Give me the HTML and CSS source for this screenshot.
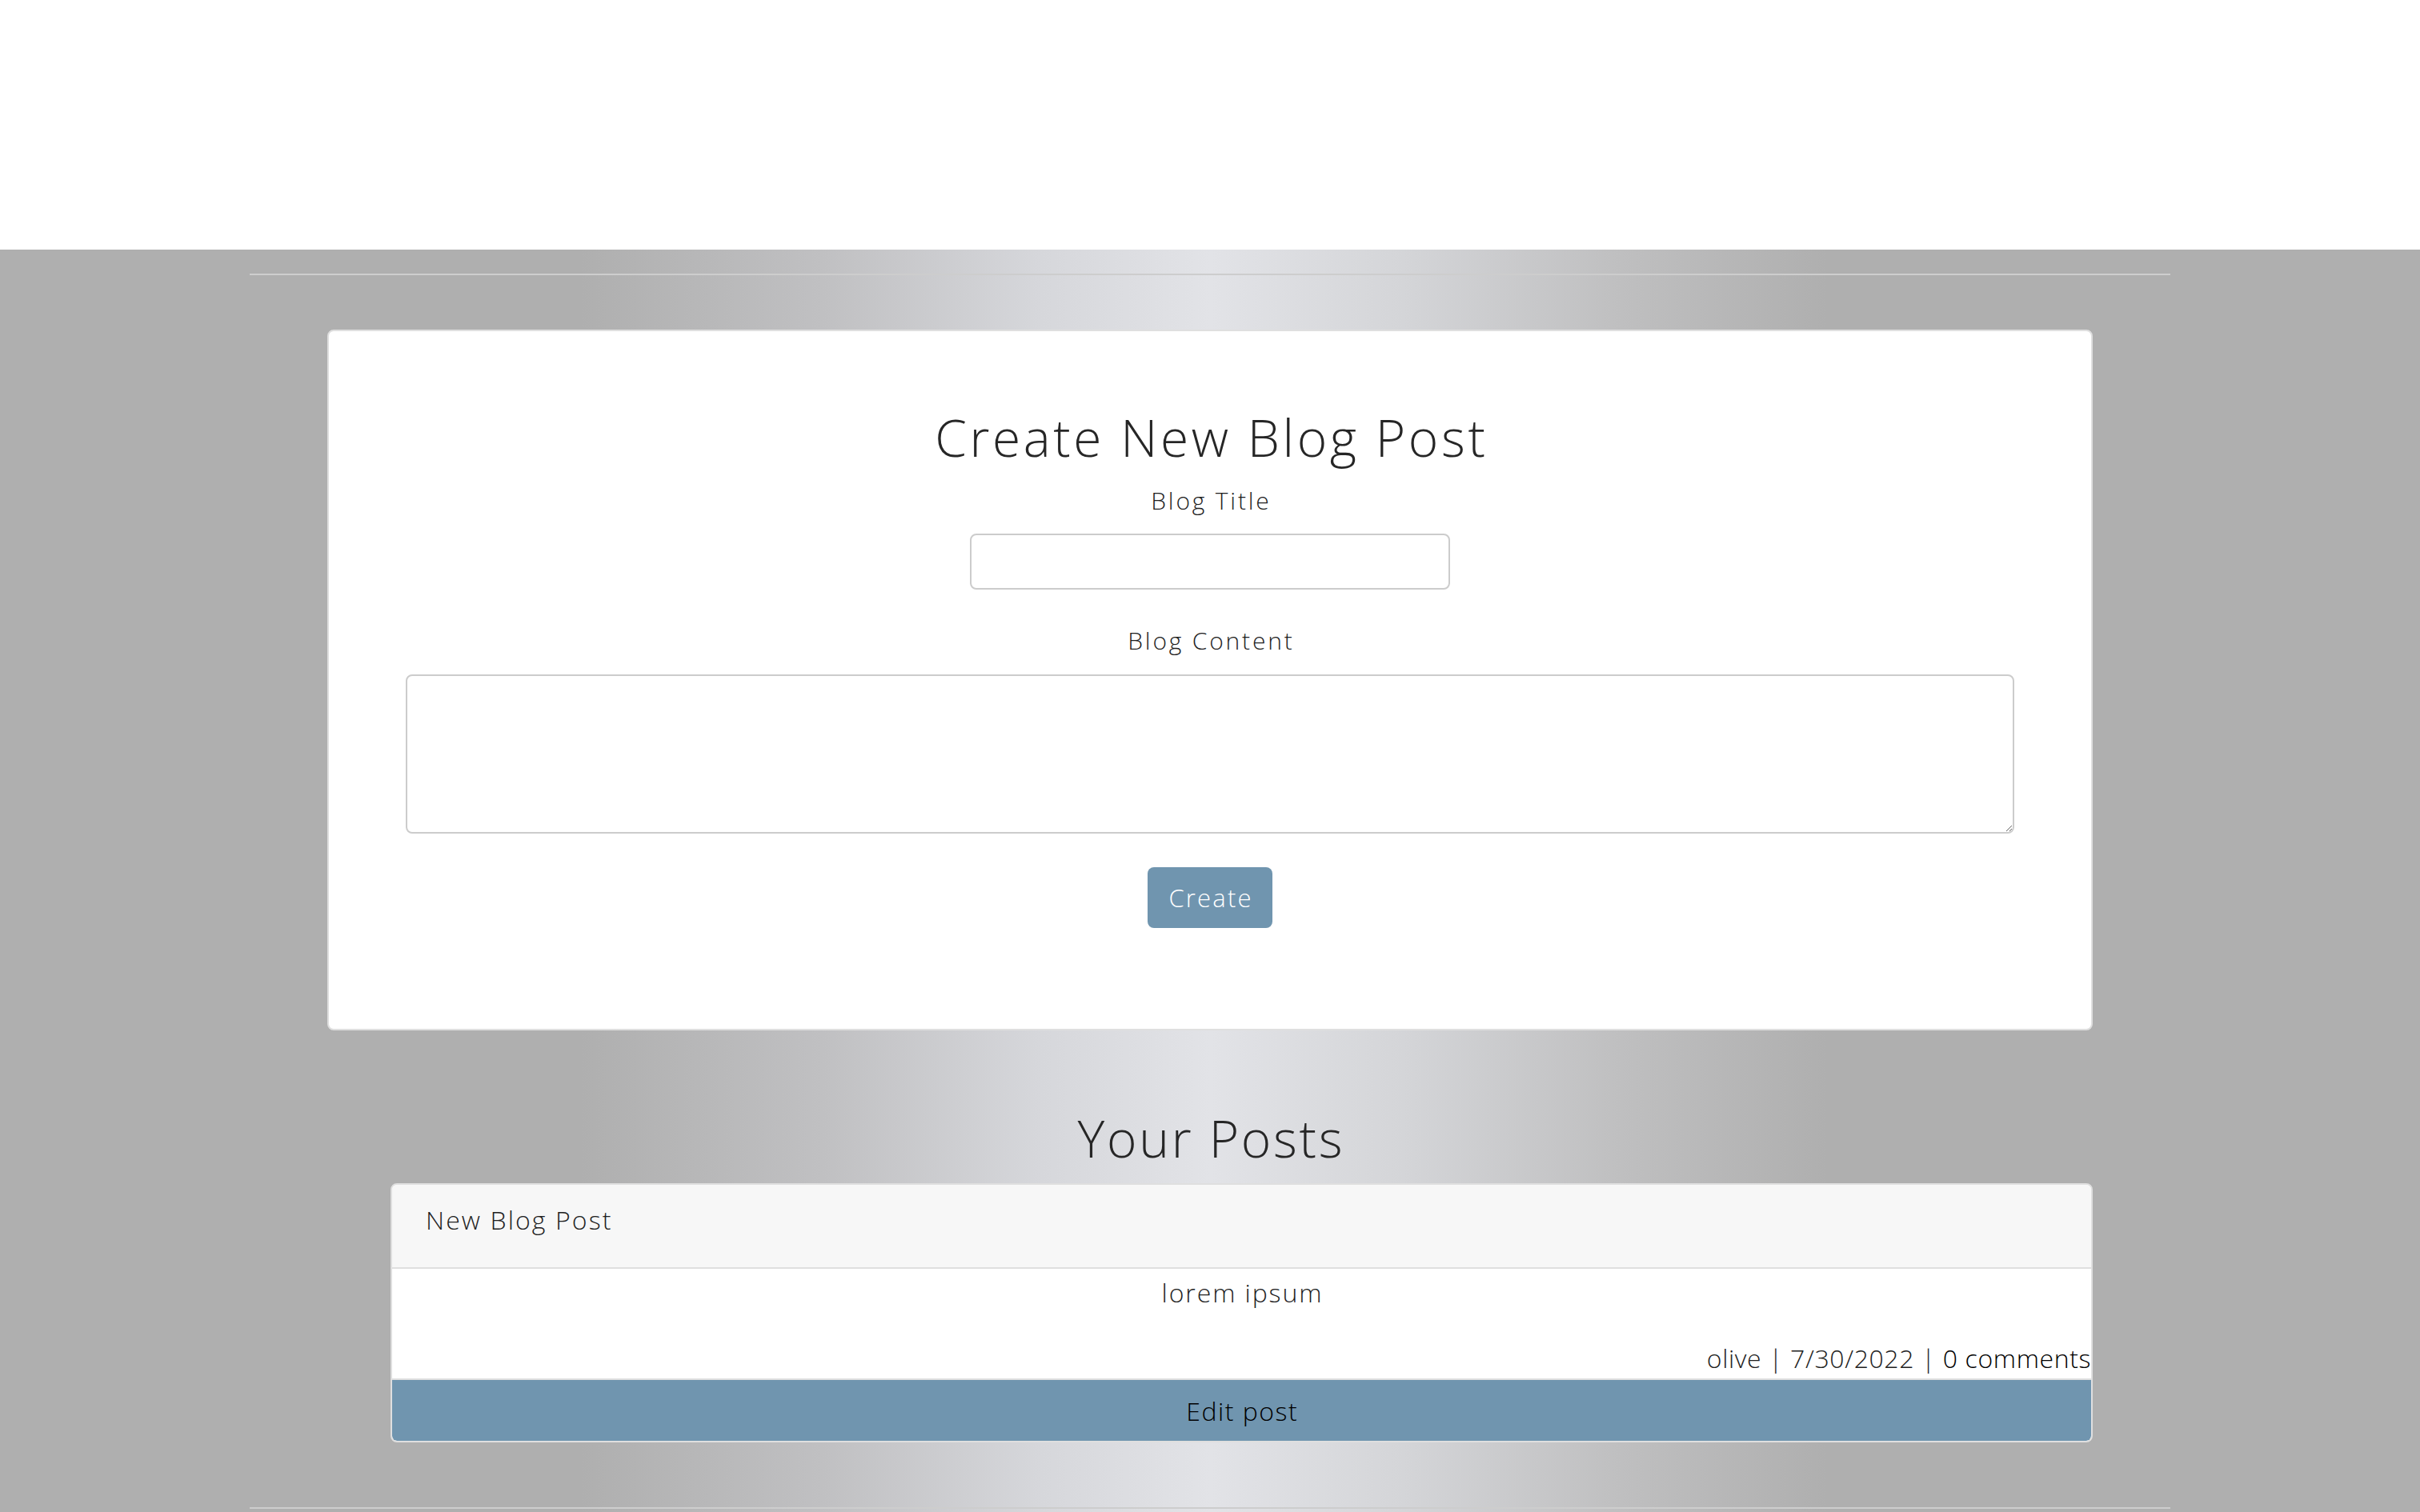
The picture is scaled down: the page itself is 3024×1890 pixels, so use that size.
FILE: index.html
```html
<!DOCTYPE html>
<html lang="en">
<head>
<meta charset="utf-8">
<title>Dashboard</title>
<link rel="stylesheet" href="styles.css">
</head>
<body>
<header class="topbar"></header>
<main class="page">
  <div class="container">
    <hr class="rule">
    <section class="form-card">
      <h2 class="heading form-heading">Create New Blog Post</h2>
      <label class="field-label" for="blog-title">Blog Title</label>
      <input class="title-input" id="blog-title" type="text">
      <label class="field-label field-label-content" for="blog-content">Blog Content</label>
      <textarea class="content-input" id="blog-content"></textarea>
      <button class="create-btn" type="button">Create</button>
    </section>
    <h2 class="heading posts-heading">Your Posts</h2>
    <article class="post-card">
      <div class="post-header">New Blog Post</div>
      <div class="post-body">
        <p class="post-text">lorem ipsum</p>
        <p class="post-meta">olive | 7/30/2022 | <a class="comments-link" href="#">0 comments</a></p>
      </div>
      <button class="edit-btn" type="button">Edit post</button>
    </article>
    <hr class="rule rule-bottom">
  </div>
</main>
</body>
</html>
```
FILE: styles.css
```css
* { box-sizing: border-box; }
html, body { margin: 0; padding: 0; }
body {
  font-family: "Open Sans", "Liberation Sans", sans-serif;
  font-weight: 300;
  color: #222;
  background: #afafaf;
}
.topbar { height: 312px; background: #fff; }
.page {
  background: linear-gradient(90deg, #afafaf 24%, #c0c0c2 34%, #d6d7db 43%, #e2e3e7 50%, #d4d5d8 58%, #bfbfc0 67%, #afafaf 75.5%);
  padding: 30px 0 4px;
}
.container { width: 2400px; margin: 0 auto; }
.rule { height: 2px; border: 0; margin: 0; background: #cdcdcd; }
.rule-bottom { margin-top: 81px; }
.form-card {
  width: 2206px;
  margin: 68px auto 0;
  background: #fff;
  border: 2px solid #dfdfdf;
  border-radius: 8px;
  padding: 94px 96px 126px;
  display: flex;
  flex-direction: column;
  align-items: center;
}
.heading {
  margin: 0;
  font-size: 64px;
  line-height: 77px;
  font-weight: 300;
  text-align: center;
  color: #262626;
}
.form-heading { letter-spacing: 3.6px; padding-left: 3.6px; }
.field-label {
  margin-top: 18px;
  font-size: 30px;
  line-height: 45px;
  color: #1f1f1f;
  letter-spacing: 2.8px;
  padding-left: 2.8px;
}
.field-label-content { margin-top: 41px; }
.title-input {
  margin-top: 19px;
  width: 600px;
  height: 70px;
  border: 2px solid #ccc;
  border-radius: 8px;
  background: #fff;
  font: inherit;
  font-size: 30px;
}
.content-input {
  margin-top: 20px;
  width: 100%;
  height: 199px;
  border: 2px solid #ccc;
  border-radius: 8px;
  background: #fff;
  font: inherit;
  font-size: 30px;
}
.create-btn {
  margin-top: 42px;
  width: 156px;
  height: 76px;
  background: #7095af;
  color: #fff;
  border: 0;
  border-radius: 8px;
  font-family: inherit;
  font-weight: 300;
  font-size: 31px;
  letter-spacing: 2.2px;
  padding: 0 0 0 2.2px;
}
.posts-heading { margin-top: 96px; letter-spacing: 2.7px; padding-left: 2.7px; }
.post-card {
  margin: 18px 97px 0 176px;
  background: #fff;
  border: 2px solid #dfdfdf;
  border-radius: 8px;
  overflow: hidden;
}
.post-header {
  background: #f7f7f7;
  border-bottom: 2px solid #dfdfdf;
  padding: 20px 42px 35px;
  font-size: 32px;
  line-height: 48px;
  color: #1f1f1f;
  letter-spacing: 2.1px;
}
.post-body { padding: 6px 0 1px; }
.post-text {
  margin: 0;
  text-align: center;
  font-size: 32px;
  line-height: 48px;
  color: #1f1f1f;
  letter-spacing: 1.9px;
  padding-left: 1.9px;
}
.post-meta {
  margin: 34px 0 0;
  text-align: right;
  font-size: 32px;
  line-height: 48px;
  color: #1f1f1f;
  letter-spacing: 0.6px;
}
.comments-link { color: #000; text-decoration: none; }
.edit-btn {
  display: block;
  width: 100%;
  height: 78px;
  border: 0;
  border-top: 2px solid #dfdfdf;
  border-radius: 0 0 6px 6px;
  background: #7095af;
  color: #000;
  font-family: inherit;
  font-weight: 300;
  font-size: 32px;
  letter-spacing: 1.5px;
  padding: 0 0 0 1.5px;
}
```
